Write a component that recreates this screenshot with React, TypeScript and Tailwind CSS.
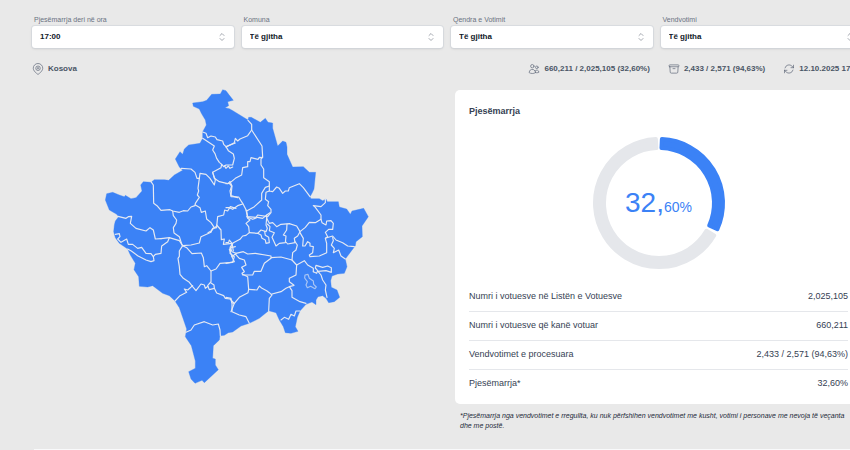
import { useState } from "react";
import { HiOutlineArchiveBox, HiOutlineArrowPath, HiOutlineUsers } from "react-icons/hi2";

const filters = [
  { id: "ora", label: "Pjesëmarrja deri në ora", options: ["17:00", "15:00", "11:00"] },
  { id: "komuna", label: "Komuna", options: ["Të gjitha"] },
  { id: "qendra", label: "Qendra e Votimit", options: ["Të gjitha"] },
  { id: "vendvotimi", label: "Vendvotimi", options: ["Të gjitha"] },
];

const rows = [
  { label: "Numri i votuesve në Listën e Votuesve", value: "2,025,105" },
  { label: "Numri i votuesve që kanë votuar", value: "660,211" },
  { label: "Vendvotimet e procesuara", value: "2,433 / 2,571 (94,63%)" },
  { label: "Pjesëmarrja*", value: "32,60%" },
];

const outline =
  "M290 54 320 50 332 46 347 28 373 27 380 14 390 17 398 28 412 46 395 50 398 62 387 68 400 71 412 78 456 105 458 97 466 97 493 112 508 100 516 112 530 114 530 130 545 183 560 168 570 172 573 186 573 208 590 246 622 245 640 262 659 262 654 312 648 325 642 335 645 341 670 341 680 347 690 342 694 350 727 350 730 366 752 372 763 388 768 378 803 370 817 395 798 423 799 455 780 470 778 482 748 522 753 545 745 565 725 567 708 573 704 587 706 607 723 615 731 637 715 650 698 653 690 640 680 632 666 635 660 645 660 659 648 651 630 658 612 678 604 697 598 725 606 739 585 745 568 743 562 725 550 705 540 683 518 677 490 700 460 715 435 723 410 741 397 743 385 751 372 752 370 765 352 782 350 820 358 822 358 840 367 854 325 893 318 886 297 895 285 882 278 860 298 850 298 828 286 782 268 755 272 732 250 668 237 648 220 632 200 625 170 602 155 606 130 604 128 575 114 554 118 535 103 510 95 492 70 475 58 458 53 440 55 420 58 408 68 395 62 388 40 375 28 345 32 326 50 322 70 330 85 335 88 331 105 341 120 338 138 318 134 300 142 290 165 292 175 284 205 284 218 286 235 270 260 256 250 246 238 222 252 200 260 208 265 192 278 180 312 175 320 160 320 140 331 120 328 105 316 85 310 72 292 64Z";

// Municipality borders, one list per quarter of the map
const northWest = [
  "M320 141 330 145 335 158 345 153 358 156 363 164 380 168 383 178 390 185 418 174",
  "M320 160 338 172 355 183 350 195 357 206 362 220 370 232 377 238 375 248 350 262 355 280 370 290 395 296 402 290",
  "M377 238 383 245 390 240 410 240 415 220 412 207 397 197 390 185",
  "M385 242 390 250 397 243 402 250 410 246",
  "M256 250 285 252 297 262 303 280 310 280 312 265 330 268 342 280 355 300 358 285 350 262",
  "M310 280 306 310 308 318 304 330 310 337 298 355 297 362 285 366 275 378 262 377 250 382 230 378 222 374 195 376 183 362 173 355 172 300 165 290",
  "M298 360 312 368 316 382 328 378 332 402 345 413 355 428 345 438 336 443",
  "M230 378 232 392 242 405 240 415 232 428 234 444 250 455 258 480",
  "M355 428 362 424 365 395 383 390 386 375 395 378 403 365 420 370",
  "M402 290 408 303 405 332 425 338",
  "M66 394 90 400 97 395 107 394 103 415 120 430 150 438 162 428 172 435 178 462 195 461",
];

const northEast = [
  "M66 106 77 118 77 135 65 152 42 162 35 168 28 160 25 173 0 186",
  "M77 135 108 183 110 215 105 222 105 240 113 252 113 278 130 290 130 300",
  "M110 218 100 217 96 223 75 218 72 230 65 230 65 245 50 248 47 270 28 280 10 295 0 296",
  "M10 295 17 303 12 318 15 335 38 336 44 346 50 355 62 378 85 365 107 345 107 325 118 307 130 303",
  "M130 300 130 318 140 320 152 306 160 310 170 325 178 318 187 318 190 308 220 296 232 308 252 335",
  "M130 318 120 322 118 343 128 350 125 362 135 373 135 383 125 395",
  "M0 368 10 368 20 373 35 362 50 357",
  "M62 378 65 395 90 397 95 390 125 395",
];

const southWest = [
  "M195 41 220 38 250 47 260 62",
  "M220 38 215 50 197 63 195 85 178 88 172 95 174 107 165 110 150 105 125 92 106 78 95 72",
  "M58 28 70 26 72 35 65 42 75 52 92 42 97 58 110 58 125 70 137 67 150 85 165 86 172 95",
  "M260 62 250 78 250 94 246 100 250 125 252 148 262 160 280 172 290 185 300 197 315 177 325 180 328 190 336 184",
  "M237 228 252 212 272 202 265 192 275 195 290 182",
  "M260 62 285 60 310 54 315 35 345 22 350 10 362 8",
  "M260 62 272 68 288 86 316 84 322 98 325 125 332 122 345 138 345 170 335 182 340 194 355 190 354 180 345 174",
  "M345 138 360 132 372 115 410 112 415 95 402 85 405 68 418 65",
  "M362 0 375 15 376 44 385 42 382 58 408 55 412 78",
  "M355 190 362 204 383 212 388 220 402 222 415 235 405 260",
  "M270 322 285 315 295 300 325 290 350 300 367 297 372 315 373 332",
];

const southEast = [
  "M60 0 65 25 72 30 60 40 68 50 70 68 60 76 50 78 42 88 22 98 12 112 18 125 30 130",
  "M62 20 80 28 95 22 110 25 122 15 132 8",
  "M122 15 122 25 120 45 124 55 120 65 105 60 95 70 70 68",
  "M122 25 130 40 140 38 152 50 165 43 190 41 212 48 222 65 238 52 250 37 268 38 285 28",
  "M124 42 132 50 130 62 145 68 138 82 150 108 160 100 178 98 180 78 172 75 182 60 183 42",
  "M95 70 105 75 108 85 118 90 120 100 130 98 128 82 118 76 116 65",
  "M222 65 215 78 205 85 207 98 185 102 180 96",
  "M222 68 232 85 230 108 237 108 245 95 252 100 252 108 262 110 260 128 250 135 252 140 280 138 302 128 302 100 298 85 305 80 298 67 308 58 320 58 322 40 315 32 302 33 300 45 288 38 285 28 285 15 268 -8 262 -13 285 -10 298 -22 298 -33",
  "M300 84 320 78 330 90 350 98 365 108 385 110",
  "M320 82 322 92 316 105 325 115 322 128 338 120 345 138 358 147",
  "M207 95 214 105 210 120 200 128 198 150 212 165 235 152 245 165 262 175 262 185",
  "M0 98 8 97 10 90 18 100 18 110 10 118 18 140",
  "M30 130 52 125 65 132 88 130 135 138 135 143 165 141 198 150",
  "M18 140 28 132 40 145 55 150 60 165 47 172 55 185 48 190 50 195 80 195 85 184 105 184 115 160 135 145",
  "M50 193 65 200 68 238 66 248 40 262 25 280 17 278 15 265 0 262",
  "M18 140 25 155 0 160",
  "M68 238 93 240 100 228 108 235 122 242 130 248 138 255 130 265 128 302",
  "M138 252 165 245 180 235 190 230 204 226 190 215 190 205 210 195 212 165",
  "M190 230 198 242 198 262 222 275 240 280",
  "M18 280 18 305 40 315 60 320 70 340",
  "M165 330 175 322 188 328 195 313 205 318 210 303 222 303",
  "M262 185 272 190 275 182 268 174 270 166 290 172 305 168 316 173 316 187 300 182 276 184",
  "M276 184 285 195 290 210 300 225 298 240 303 262",
];

const enclave = "M237 195 246 193 250 205 262 213 263 223 271 231 267 236 254 229 244 233 240 225 244 215 236 204Z";

function KosovoMap() {
  const quarters = [
    { paths: northWest, shift: "translate(0 0)" },
    { paths: northEast, shift: "translate(390 0)" },
    { paths: southWest, shift: "translate(0 420)" },
    { paths: southEast, shift: "translate(390 375)" },
  ];

  return (
    <svg viewBox="0 0 840 915" className="h-auto w-[280px]" role="img" aria-label="Kosova">
      <path d={outline} fill="#3b82f6" stroke="#3b82f6" strokeWidth="1" strokeLinejoin="round" />
      <g fill="none" stroke="#e5e9f2" strokeWidth="3.5" strokeLinejoin="round" strokeLinecap="round">
        {quarters.map((quarter) => (
          <g key={quarter.shift} transform={quarter.shift}>
            {quarter.paths.map((d) => (
              <path key={d} d={d} />
            ))}
          </g>
        ))}
        <path d={enclave} transform="translate(390 375)" strokeOpacity="0.65" />
      </g>
    </svg>
  );
}

function PinIcon() {
  return (
    <svg viewBox="0 0 24 24" className="size-3 text-gray-500" fill="none" stroke="currentColor" strokeWidth="1.5" aria-hidden="true">
      <path d="M12 22.5c-1.2 0-2-.8-3.200-2C6 17.700 2.500 14.500 2.500 10.500a9.500 9.500 0 0 1 19 0c0 4-3.500 7.200-6.300 10-1.200 1.200-2 2-3.200 2Z" />
      <circle cx="12" cy="10.500" r="4.500" />
      <circle cx="12" cy="10.500" r="1.500" />
    </svg>
  );
}

// Ring segment with rounded corners, angles in degrees from the top
function segment(from: number, to: number) {
  const point = (r: number, deg: number) => {
    const a = (deg * Math.PI) / 180;
    return `${(67 + r * Math.sin(a)).toFixed(2)} ${(67 - r * Math.cos(a)).toFixed(2)}`;
  };
  const large = to - from > 180 ? 1 : 0;
  return `M${point(64, from)} A64 64 0 ${large} 1 ${point(64, to)} L${point(55, to)} A55 55 0 ${large} 0 ${point(55, from)}Z`;
}

function Donut() {
  return (
    <div className="relative mx-auto h-[134px] w-[134px]">
      <svg viewBox="0 0 134 134" className="h-full w-full" strokeWidth="4" strokeLinejoin="round" aria-hidden="true">
        <path d={segment(120.4, 357.2)} fill="#e5e7eb" stroke="#e5e7eb" />
        <path d={segment(2.6, 114.2)} fill="#3b82f6" stroke="#3b82f6" />
      </svg>
      <p className="absolute inset-0 flex items-center justify-center text-[#3b82f6]">
        <span className="text-[28px] leading-none">
          32,<span className="text-sm leading-none">60%</span>
        </span>
      </p>
    </div>
  );
}

function Filter({ id, label, options }: { id: string; label: string; options: string[] }) {
  const [value, setValue] = useState(options[0]);

  return (
    <div>
      <label htmlFor={id} className="block px-0.5 text-[7px] leading-3 text-gray-500">
        {label}
      </label>
      <div className="relative">
        <select
          id={id}
          value={value}
          onChange={(event) => setValue(event.target.value)}
          className="block h-[22px] w-full appearance-none rounded-[3px] bg-white pr-5 pl-2 text-[8px] font-bold text-gray-900 shadow-sm ring-1 ring-gray-300/60 outline-none"
        >
          {options.map((option) => (
            <option key={option}>{option}</option>
          ))}
        </select>
        <svg
          viewBox="0 0 8 10"
          className="pointer-events-none absolute top-1/2 right-2 h-2.5 w-2 -translate-y-1/2"
          fill="none"
          stroke="#a5a9b1"
          strokeLinecap="round"
          strokeLinejoin="round"
          aria-hidden="true"
        >
          <path d="M2 3.500 4 1.500 6 3.500M2 6.500 4 8.500 6 6.500" />
        </svg>
      </div>
    </div>
  );
}

export default function App() {
  return (
    <main className="min-h-screen overflow-hidden bg-[#e9e9e9] pt-[14px] pl-8 font-['Liberation_Sans',Arial,sans-serif] text-gray-700">
      <div className="-mr-3">
        <div className="grid grid-cols-4 gap-2">
          {filters.map((filter) => (
            <Filter key={filter.id} {...filter} />
          ))}
        </div>

        <div className="mt-[15px] flex h-3 items-center justify-between text-[8px] font-bold text-gray-600">
          <span className="flex items-center gap-1">
            <PinIcon />
            Kosova
          </span>
          <div className="flex items-center gap-[18px] whitespace-nowrap">
            <span className="flex items-center gap-1">
              <HiOutlineUsers className="size-3 text-gray-500" />
              660,211 / 2,025,105 (32,60%)
            </span>
            <span className="flex items-center gap-1">
              <HiOutlineArchiveBox className="size-3 text-gray-500" />
              2,433 / 2,571 (94,63%)
            </span>
            <span className="flex items-center gap-1">
              <HiOutlineArrowPath className="size-3 text-gray-500" />
              12.10.2025 17:00
            </span>
          </div>
        </div>

        <div className="mt-[10px] grid grid-cols-2 gap-4">
          <div className="flex items-start justify-center">
            <KosovoMap />
          </div>

          <div>
            <section className="mt-[5px] rounded-[5px] bg-white px-[14px] pt-[14px] pb-1.5">
              <h2 className="text-[9px] leading-[14px] font-bold text-gray-700">Pjesëmarrja</h2>
              <div className="mt-[18px]">
                <Donut />
              </div>
              <table className="mt-3 w-full text-[9px] text-gray-700">
                <tbody className="divide-y divide-gray-200">
                  {rows.map((row) => (
                    <tr key={row.label} className="h-[29px]">
                      <th scope="row" className="text-left font-normal">
                        {row.label}
                      </th>
                      <td className="text-right whitespace-nowrap">{row.value}</td>
                    </tr>
                  ))}
                </tbody>
              </table>
            </section>
            <p className="mt-[7px] px-[5px] text-[7px] leading-[10px] text-gray-800 italic">
              *Pjesëmarrja nga vendvotimet e rregullta, ku nuk përfshihen vendvotimet me kusht, votimi i personave me nevoja të
              veçanta dhe me postë.
            </p>
          </div>
        </div>

        <div className="mt-[18px] ml-0.5 h-px bg-gray-50" />
      </div>
    </main>
  );
}
